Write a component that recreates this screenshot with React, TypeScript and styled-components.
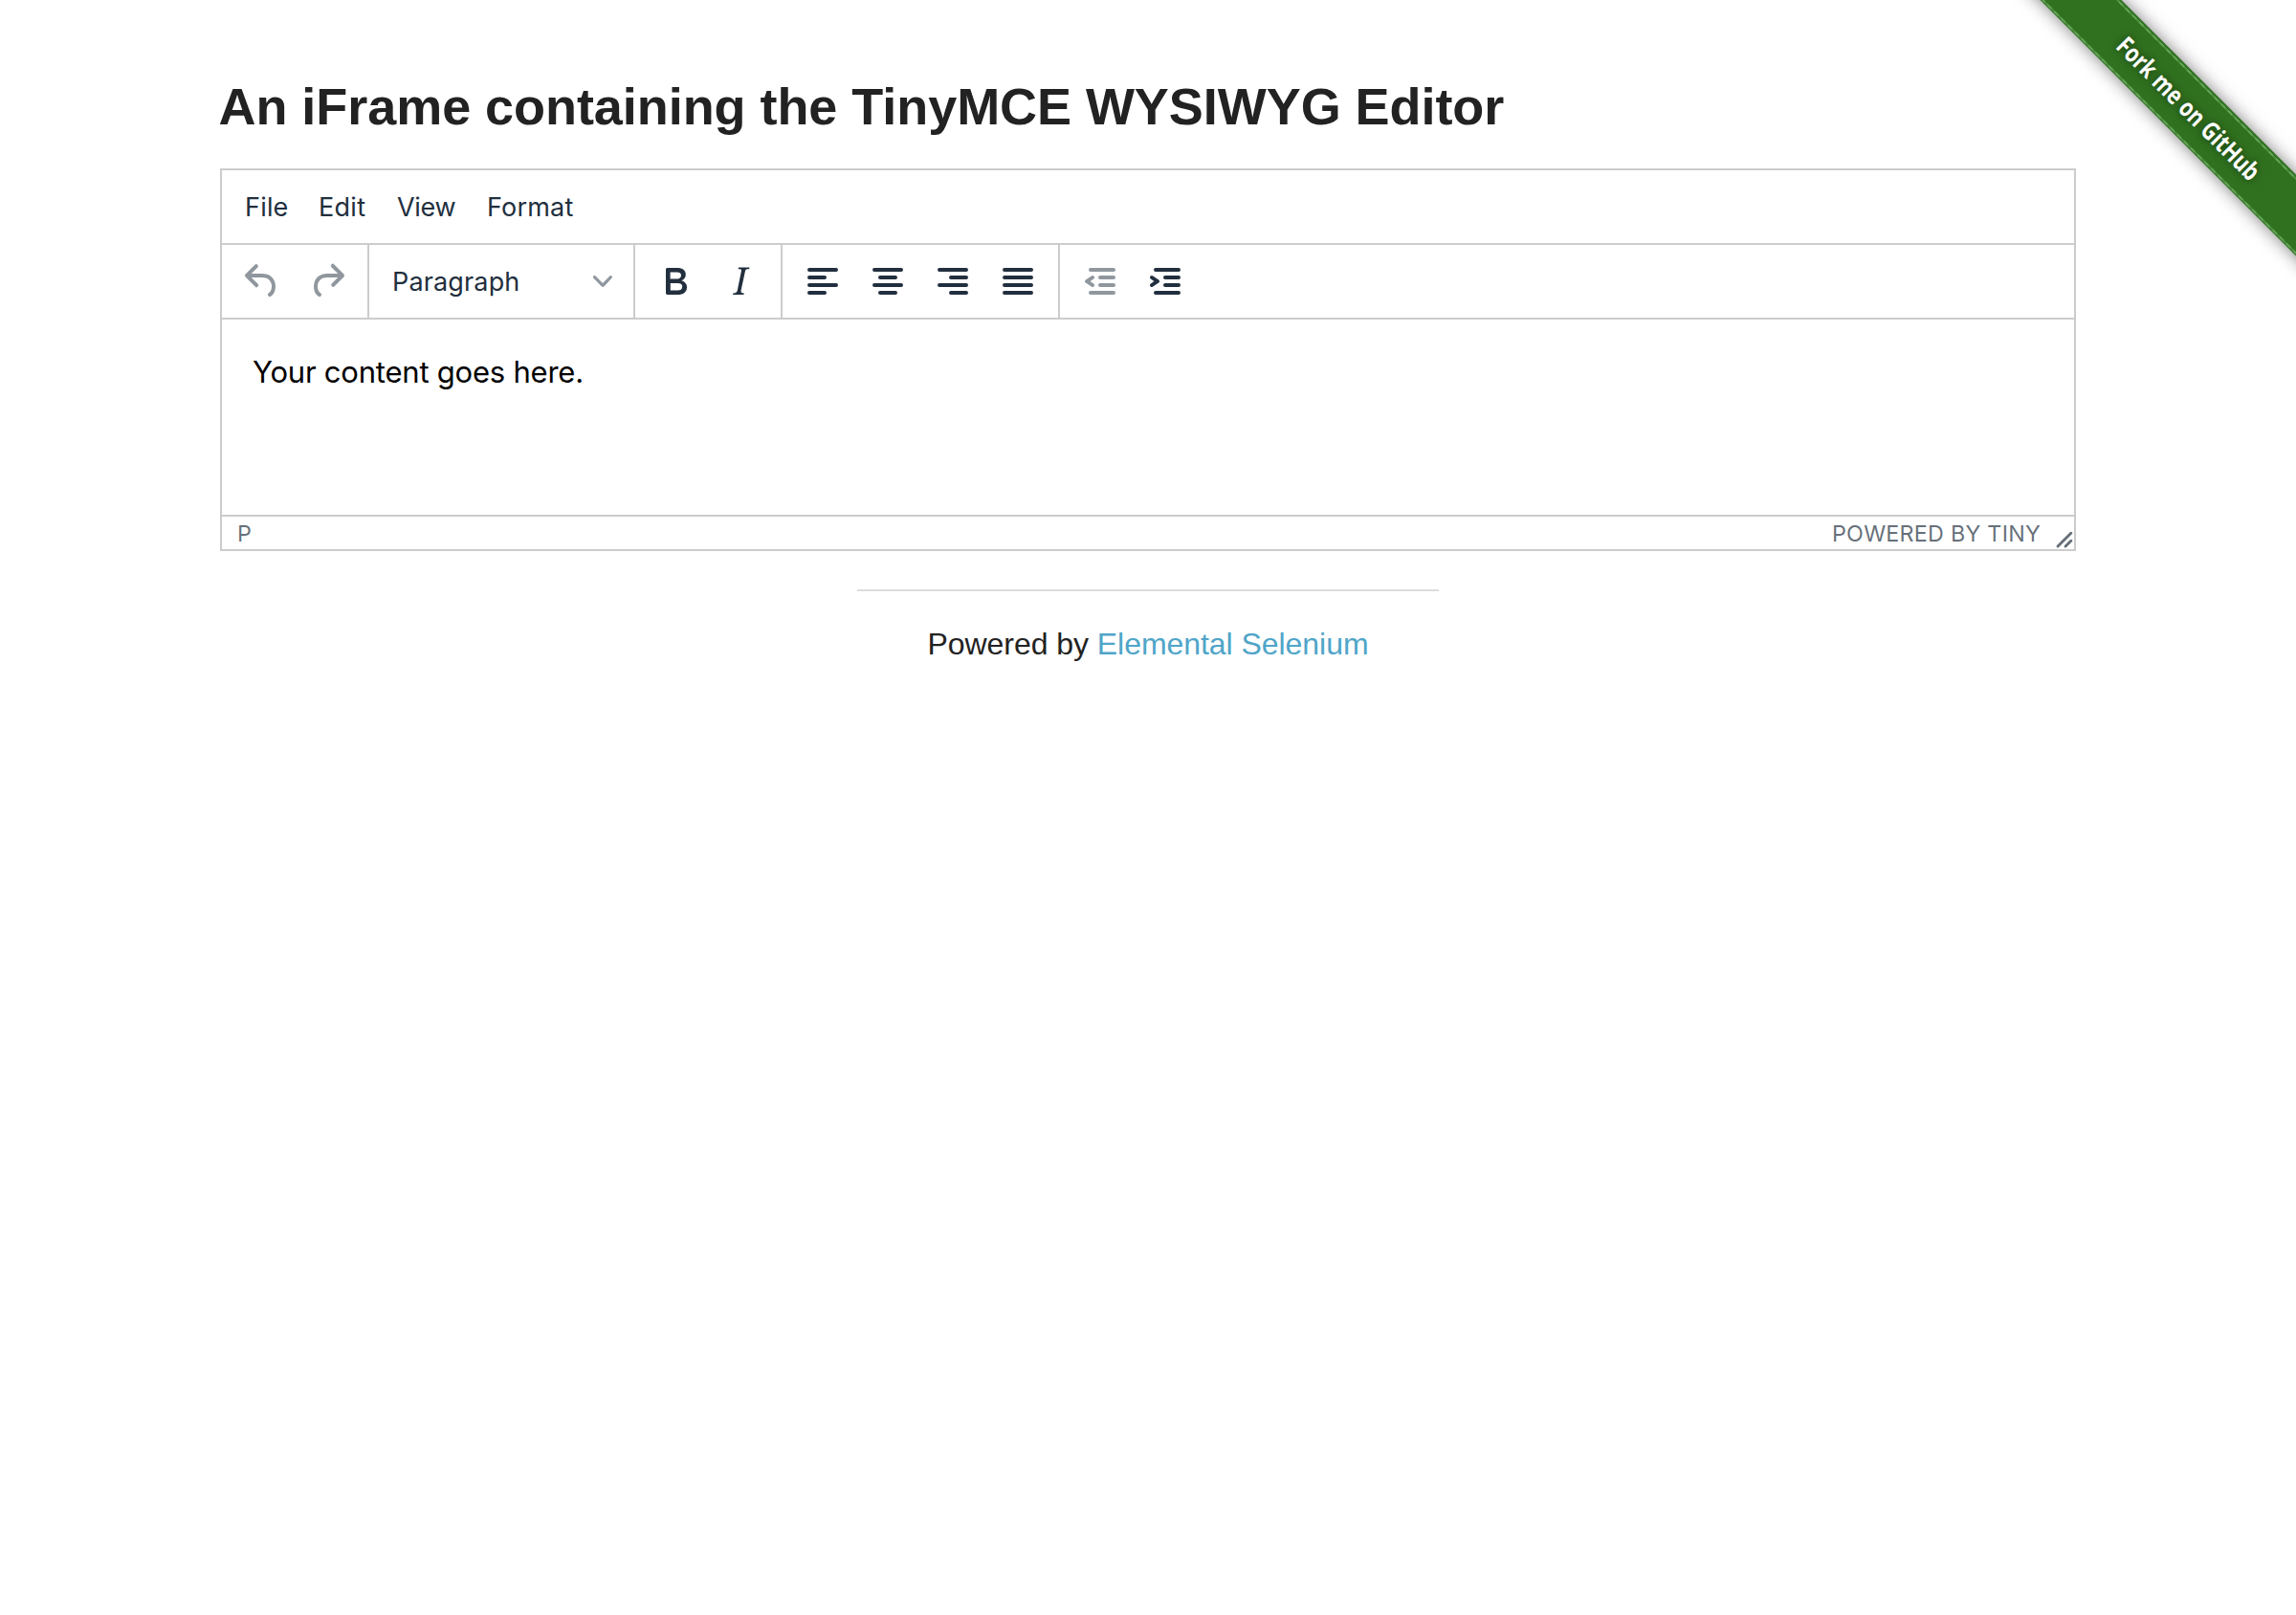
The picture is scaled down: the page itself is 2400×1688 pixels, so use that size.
import React from "react";
import styled, { createGlobalStyle } from "styled-components";

const line = "#cccccc";
const ink = "#222f3e";
const uiFont = `Inter, "Liberation Sans", sans-serif`;

const GlobalStyle = createGlobalStyle`
  *, *::before, *::after { box-sizing: border-box; }
  body {
    margin: 0;
    background: #fff;
    color: #222;
    font-family: "Liberation Sans", Arial, sans-serif;
  }
`;

const Page = styled.div`
  position: relative;
  min-height: 1688px;
  padding: 73px 230px 0;
  overflow: hidden;
`;

const Title = styled.h3`
  margin: 0 0 27px -1.5px;
  font-size: 54px;
  font-weight: 700;
  line-height: 76px;
  letter-spacing: -0.05px;
  white-space: nowrap;
`;

const Editor = styled.section`
  display: flex;
  flex-direction: column;
  height: 400px;
  border: 2px solid ${line};
  font-family: ${uiFont};
  color: ${ink};
`;

const MenuBar = styled.nav`
  display: flex;
  height: 76px;
  padding-left: 24px;
`;

const MenuItem = styled.button<{ $width: number; $tracking: number }>`
  width: ${(p) => p.$width}px;
  padding: 0;
  border: 0;
  background: none;
  color: inherit;
  font: 400 27px ${uiFont};
  letter-spacing: ${(p) => p.$tracking}px;
  text-align: left;
`;

const Toolbar = styled.div`
  display: flex;
  height: 78px;
  border-top: 2px solid ${line};
`;

const Group = styled.div`
  display: flex;
  align-items: center;
  padding: 0 8px;

  & + & {
    border-left: 2px solid ${line};
  }
  &:first-child {
    width: 152px;
  }
`;

const ToolButton = styled.button<{ $disabled?: boolean }>`
  display: flex;
  align-items: center;
  justify-content: center;
  width: 68px;
  height: 56px;
  padding: 0;
  border: 0;
  background: none;
  color: ${(p) => (p.$disabled ? "rgba(34, 47, 62, 0.5)" : ink)};
`;

const Glyph = styled.svg<{ $size: number }>`
  display: block;
  width: ${(p) => p.$size}px;
  height: ${(p) => p.$size}px;
  fill: currentColor;
`;

const BlockSelect = styled.button`
  display: flex;
  align-items: center;
  justify-content: space-between;
  width: 260px;
  height: 56px;
  padding: 0 14px 0 16px;
  border: 0;
  background: none;
  color: inherit;
  font: 400 27px ${uiFont};
  letter-spacing: 0.15px;

  svg {
    color: rgba(34, 47, 62, 0.5);
  }
`;

const Content = styled.div`
  flex: 1;
  padding: 32px;
  border-top: 2px solid ${line};
  color: #000;
`;

const Paragraph = styled.p`
  margin: 0;
  font-size: 31px;
  line-height: 45px;
  letter-spacing: -0.22px;
`;

const StatusBar = styled.footer`
  display: flex;
  justify-content: space-between;
  height: 36px;
  padding-left: 16px;
  border-top: 2px solid ${line};
  color: rgba(34, 47, 62, 0.7);
  font-size: 23.3px;
  line-height: 36px;
  letter-spacing: 0.25px;
`;

const Branding = styled.div`
  display: flex;
  align-items: flex-start;
  gap: 15px;

  svg {
    margin-top: 14px;
  }
`;

const PageFooter = styled.div`
  width: 608px;
  margin: 40px auto 0;
  padding-top: 31px;
  border-top: 2px solid #ddd;
  font-size: 32px;
  line-height: 48px;
  letter-spacing: -0.05px;
  text-align: center;
`;

const Link = styled.a`
  color: #4fa5c9;
  text-decoration: none;
`;

const RibbonCorner = styled.div`
  position: absolute;
  top: 0;
  right: 0;
  width: 298px;
  height: 298px;
  overflow: hidden;
`;

const Ribbon = styled.a`
  position: absolute;
  top: 82px;
  left: -45px;
  display: flex;
  align-items: center;
  justify-content: center;
  width: 460px;
  height: 60px;
  background: #30711f;
  box-shadow: 0 0 18px rgba(0, 0, 0, 0.5);
  transform: rotate(45deg);

  &::before {
    content: "";
    position: absolute;
    inset: 1.5px 0;
    border: solid rgba(150, 215, 145, 0.3);
    border-width: 2px 0;
  }
  &::after {
    content: "";
    position: absolute;
    inset: 1.5px 0;
    border: dashed rgba(150, 215, 145, 0.3);
    border-width: 2px 0;
  }
`;

const RibbonText = styled.span`
  color: #fff;
  font: 700 26.5px "Open Sans", sans-serif;
  text-shadow: 0 0 10px rgba(0, 0, 0, 0.5);
  white-space: nowrap;
  transform: translateX(1px) scaleX(0.8);
`;

const paths = {
  undo: "M6.4 8H12c3.7 0 6.2 2 6.8 5.1.6 2.7-.4 5.6-2.3 6.8a1 1 0 0 1-1-1.8c1.1-.6 1.8-2.7 1.4-4.6-.5-2.1-2.1-3.5-4.9-3.5H6.4l3.3 3.3a1 1 0 1 1-1.4 1.4l-5-5a1 1 0 0 1 0-1.4l5-5a1 1 0 0 1 1.4 1.4L6.4 8Z",
  redo: "M17.6 10H12c-2.8 0-4.4 1.4-4.9 3.5-.4 2 .3 4 1.4 4.6a1 1 0 1 1-1 1.8c-2-1.2-2.9-4.1-2.3-6.8.6-3 3-5.1 6.8-5.1h5.6l-3.3-3.3a1 1 0 1 1 1.4-1.4l5 5a1 1 0 0 1 0 1.4l-5 5a1 1 0 0 1-1.4-1.4l3.3-3.3Z",
  bold: "M7.8 19c-.3 0-.5 0-.6-.2l-.2-.5V5.7c0-.2 0-.4.2-.5l.6-.2h5c1.5 0 2.7.3 3.5 1 .7.6 1.1 1.4 1.1 2.5a3 3 0 0 1-.6 1.9c-.4.6-1 1-1.6 1.2.4.1.9.3 1.3.6s.8.7 1 1.2c.4.4.5 1 .5 1.6 0 1.3-.4 2.3-1.3 3-.8.7-2.1 1-3.8 1H7.8Zm5-8.3c.6 0 1.2-.1 1.6-.5.4-.3.6-.7.6-1.3 0-1.1-.8-1.7-2.3-1.7H9.3v3.5h3.4Zm.5 6c.7 0 1.3-.1 1.7-.4.4-.4.6-.9.6-1.5s-.2-1-.7-1.4c-.4-.3-1-.4-2-.4H9.4v3.8h4Z",
  italic: "m16.7 4.7-.1.9h-.3c-.6 0-1 0-1.4.3-.3.3-.4.6-.5 1.1l-2.1 9.8v.6c0 .5.4.8 1.4.8h.2l-.2.8H8l.2-.8h.2c1.1 0 1.8-.5 2-1.5l2-9.8.1-.5c0-.6-.4-.8-1.4-.8h-.3l.2-.9h5.8Z",
  left: "M5 5h14a1 1 0 0 1 0 2H5a1 1 0 1 1 0-2Zm0 4h8a1 1 0 0 1 0 2H5a1 1 0 1 1 0-2Zm0 8h8a1 1 0 0 1 0 2H5a1 1 0 0 1 0-2Zm0-4h14a1 1 0 0 1 0 2H5a1 1 0 0 1 0-2Z",
  center: "M5 5h14a1 1 0 0 1 0 2H5a1 1 0 1 1 0-2Zm3 4h8a1 1 0 0 1 0 2H8a1 1 0 1 1 0-2Zm0 8h8a1 1 0 0 1 0 2H8a1 1 0 0 1 0-2Zm-3-4h14a1 1 0 0 1 0 2H5a1 1 0 0 1 0-2Z",
  right: "M5 5h14a1 1 0 0 1 0 2H5a1 1 0 1 1 0-2Zm6 4h8a1 1 0 0 1 0 2h-8a1 1 0 0 1 0-2Zm0 8h8a1 1 0 0 1 0 2h-8a1 1 0 0 1 0-2Zm-6-4h14a1 1 0 0 1 0 2H5a1 1 0 0 1 0-2Z",
  justify: "M5 5h14a1 1 0 0 1 0 2H5a1 1 0 1 1 0-2Zm0 4h14a1 1 0 0 1 0 2H5a1 1 0 1 1 0-2Zm0 4h14a1 1 0 0 1 0 2H5a1 1 0 0 1 0-2Zm0 4h14a1 1 0 0 1 0 2H5a1 1 0 0 1 0-2Z",
  outdent: "M7 5h12a1 1 0 0 1 0 2H7a1 1 0 1 1 0-2Zm5 4h7a1 1 0 0 1 0 2h-7a1 1 0 0 1 0-2Zm0 4h7a1 1 0 0 1 0 2h-7a1 1 0 0 1 0-2Zm-5 4h12a1 1 0 0 1 0 2H7a1 1 0 0 1 0-2Zm1.6-3.8a1 1 0 0 1-1.2 1.6l-3-2a1 1 0 0 1 0-1.6l3-2a1 1 0 0 1 1.2 1.6L6.8 12l1.8 1.2Z",
  indent: "M7 5h12a1 1 0 0 1 0 2H7a1 1 0 1 1 0-2Zm5 4h7a1 1 0 0 1 0 2h-7a1 1 0 0 1 0-2Zm0 4h7a1 1 0 0 1 0 2h-7a1 1 0 0 1 0-2Zm-5 4h12a1 1 0 0 1 0 2H7a1 1 0 0 1 0-2Zm-2.6-3.8L6.2 12l-1.8-1.2a1 1 0 0 1 1.2-1.6l3 2a1 1 0 0 1 0 1.6l-3 2a1 1 0 1 1-1.2-1.6Z",
  chevron: "M8.7 2.2c.3-.3.8-.3 1 0 .4.4.4.9 0 1.2L5.7 7.8c-.3.3-.9.3-1.2 0L.2 3.4a.8.8 0 0 1 0-1.2c.3-.3.8-.3 1.1 0L5 6l3.7-3.8Z",
  resize: "M8.1 1.1A.5.5 0 1 1 9 2l-7 7A.5.5 0 1 1 1 8l7-7ZM8.1 5.1A.5.5 0 1 1 9 6l-3 3A.5.5 0 1 1 5 8l3-3Z",
};

type IconName = keyof typeof paths;

function Icon({ name, box = 24 }: { name: IconName; box?: number }) {
  return (
    <Glyph $size={box * 2} viewBox={`0 0 ${box} ${box}`} aria-hidden="true">
      <path fillRule="evenodd" d={paths[name]} />
    </Glyph>
  );
}

function Tools({ names, disabled = [] }: { names: IconName[]; disabled?: IconName[] }) {
  return (
    <Group>
      {names.map((name) => (
        <ToolButton key={name} $disabled={disabled.includes(name)} aria-label={name}>
          <Icon name={name} />
        </ToolButton>
      ))}
    </Group>
  );
}

const menus = [
  { label: "File", width: 77, tracking: 0.2 },
  { label: "Edit", width: 82, tracking: 0.3 },
  { label: "View", width: 94, tracking: -0.3 },
  { label: "Format", width: 110, tracking: 0.2 },
];

export default function App() {
  return (
    <Page>
      <GlobalStyle />
      <Title>An iFrame containing the TinyMCE WYSIWYG Editor</Title>
      <Editor>
        <MenuBar>
          {menus.map((m) => (
            <MenuItem key={m.label} $width={m.width} $tracking={m.tracking}>
              {m.label}
            </MenuItem>
          ))}
        </MenuBar>
        <Toolbar>
          <Tools names={["undo", "redo"]} disabled={["undo", "redo"]} />
          <Group>
            <BlockSelect>
              Paragraph
              <Icon name="chevron" box={10} />
            </BlockSelect>
          </Group>
          <Tools names={["bold", "italic"]} />
          <Tools names={["left", "center", "right", "justify"]} />
          <Tools names={["outdent", "indent"]} disabled={["outdent"]} />
        </Toolbar>
        <Content>
          <Paragraph>Your content goes here.</Paragraph>
        </Content>
        <StatusBar>
          <span>P</span>
          <Branding>
            <span>POWERED BY TINY</span>
            <Icon name="resize" box={10} />
          </Branding>
        </StatusBar>
      </Editor>
      <PageFooter>
        Powered by <Link>Elemental Selenium</Link>
      </PageFooter>
      <RibbonCorner>
        <Ribbon>
          <RibbonText>Fork me on GitHub</RibbonText>
        </Ribbon>
      </RibbonCorner>
    </Page>
  );
}
